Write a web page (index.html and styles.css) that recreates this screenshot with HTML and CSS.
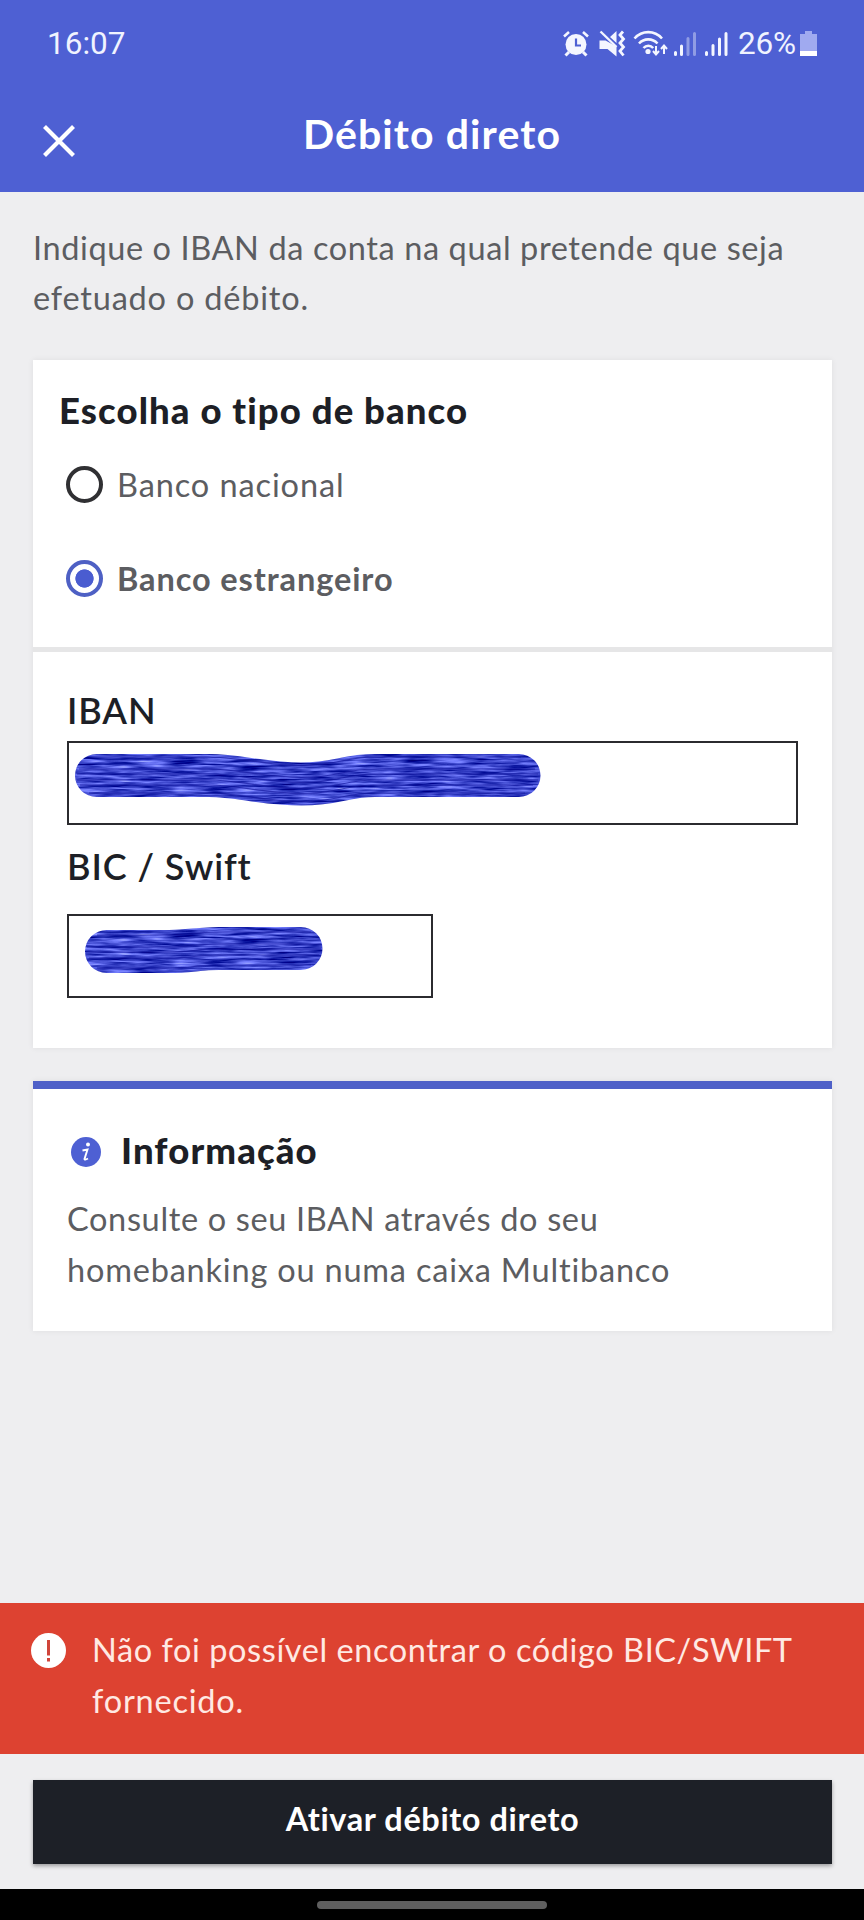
FILE: index.html
```
<!DOCTYPE html>
<html lang="pt">
<head>
    <meta charset="UTF-8">
    <title>Débito direto</title>
    <link rel="stylesheet" href="styles.css">
</head>
<body>
    <header class="header">
        <div class="status-bar">
            <span class="time">16:07</span>
            <svg class="status-icons" width="173" height="30" viewBox="0 0 173 30">
                <!-- alarm -->
                <g fill="none" stroke="#f4f6ff">
                    <circle cx="14" cy="15.5" r="10.5" fill="#f4f6ff" stroke="none"/>
                    <path d="M2 7.500L7 3M21 3l5 4.500" stroke-width="2.600"/>
                    <path d="M7 23l-3.500 3.500M21 23l3.500 3.500" stroke-width="3"/>
                    <path d="M14 9.500v7h5" stroke="#4e60d3" stroke-width="2.200"/>
                </g>
                <!-- mute / vibrate -->
                <g fill="none" stroke="#f4f6ff" stroke-width="2.400">
                    <path d="M37.500 11.500h6l11 6v10l-9-7.500h-8zM48 8l6.500-6v12z" fill="#f4f6ff" stroke="none"/>
                    <path d="M38.500 2.500l16 15.500"/>
                    <path d="M61 2.500l-3 3.500 3.500 4-3.500 4 3.500 4-3.500 4 3.500 4.500" stroke-width="2.800"/>
                </g>
                <!-- wifi -->
                <g fill="none" stroke="#f4f6ff" stroke-width="2.600">
                    <path d="M72.500 9.500c7.500-8.500 20-8.500 27.500 0"/>
                    <path d="M77 14.500c5-5.500 13.500-5.500 18.500 0"/>
                    <path d="M81.500 19c2.700-3 7-3 9.700 0"/>
                    <circle cx="86" cy="22.500" r="2.600" fill="#f4f6ff" stroke="none"/>
                    <path d="M94 17v8M91 22l3 3.500 3-3.500M102 25v-8M99 20l3-3.500 3 3.500" stroke-width="2"/>
                </g>
                <!-- signal -->
                <g stroke="#f4f6ff" stroke-width="3" stroke-linecap="round">
                    <path d="M113.500 25.500v-2M119.500 25.500v-8.500"/>
                    <path d="M126 25.500v-16M132.500 25.500v-21" opacity=".4"/>
                    <path d="M144.500 25.500v-2M151 25.500v-9M157.500 25.500v-15.500M164 25.500v-21"/>
                </g>
            </svg>
            <span class="battery-text">26%</span>
            <svg class="battery" width="18" height="28" viewBox="0 0 18 28">
                <path d="M5 1h7v3h5v22H0V4h5z" fill="#a0aaf0"/>
                <path d="M0 21h17v5H0z" fill="#fff"/>
            </svg>
        </div>
        <div class="title-bar">
            <svg class="close" width="32" height="32" viewBox="0 0 32 32">
                <path d="M1.500 1.500l29 29M30.500 1.500l-29 29" stroke="#fff" stroke-width="4.200"/>
            </svg>
            <h1 class="title">Débito direto</h1>
        </div>
    </header>

    <main class="content">
        <p class="intro">Indique o IBAN da conta na qual pretende que seja<br><span class="wide">efetuado o débito.</span></p>

        <section class="card">
            <div class="bank-type">
                <h2 class="bank-title">Escolha o tipo de banco</h2>
                <div class="option">
                    <span class="radio"></span>
                    <span class="option-label">Banco nacional</span>
                </div>
                <div class="option checked">
                    <span class="radio"></span>
                    <span class="option-label">Banco estrangeiro</span>
                </div>
            </div>
            <div class="fields">
                <div class="label label-iban">IBAN</div>
                <div class="field">
                    <svg width="500" height="80" viewBox="0 0 500 80">
                        <defs>
                            <filter id="marker" filterUnits="userSpaceOnUse" x="0" y="0" width="500" height="80" color-interpolation-filters="sRGB">
                                <feTurbulence type="fractalNoise" baseFrequency="0.03 0.4" numOctaves="3" seed="4"/>
                                <feColorMatrix values="1 0 0 0 -0.260  1 0 0 0 -0.220  0.900 0 0 0 0.350  0 0 0 0 1"/>
                                <feComposite in2="SourceGraphic" operator="in"/>
                            </filter>
                        </defs>
                        <path class="stroke" filter="url(#marker)" d="M27.500 32.500H140C170 32.500 195 41 232 41S275 32.500 306 32.500H450"/>
                        <g class="streaks">
                            <path d="M20 14H140C170 14 195 22.500 232 22.500S275 14 306 14H452"/>
                            <path d="M10 26H140C170 26 195 34.500 232 34.500S275 26 306 26H466"/>
                            <path d="M8 31H140C170 31 195 39.500 232 39.500S275 31 306 31H469"/>
                            <path d="M8 37H140C170 37 195 45.500 232 45.500S275 37 306 37H469"/>
                            <path d="M11 42H140C170 42 195 50.500 232 50.500S275 42 306 42H464"/>
                            <path d="M20 50H140C170 50 195 58.500 232 58.500S275 50 306 50H456"/>
                        </g>
                    </svg>
                </div>
                <div class="label label-bic">BIC / Swift</div>
                <div class="field field-bic">
                    <svg width="300" height="80" viewBox="0 0 300 80">
                        <path class="stroke" filter="url(#marker)" d="M37.500 35.500H100C120 35.500 130 32.500 150 32.500H232"/>
                        <g class="streaks">
                            <path d="M28 19H100C120 19 130 16 150 16H242"/>
                            <path d="M18 31H100C120 31 130 28 150 28H252"/>
                            <path d="M17 36H100C120 36 130 33 150 33H252"/>
                            <path d="M20 42H100C120 42 130 39 150 39H250"/>
                            <path d="M28 52H100C120 52 130 49 150 49H242"/>
                        </g>
                    </svg>
                </div>
            </div>
        </section>

        <section class="card info">
            <div class="info-head">
                <svg class="info-icon" width="30" height="30" viewBox="0 0 30 30">
                    <circle cx="15" cy="15" r="15" fill="#4e60d3"/>
                    <circle cx="17" cy="7.500" r="2" fill="#fff"/>
                    <path d="M11.500 13.500l5-1-3 9.500q0 1.500 3.500-.500" fill="none" stroke="#fff" stroke-width="1.900"/>
                </svg>
                <h2 class="info-title">Informação</h2>
            </div>
            <p class="info-text">Consulte o seu IBAN através do seu<br><span class="wide">homebanking ou numa caixa Multibanco</span></p>
        </section>
    </main>

    <div class="alert">
        <svg class="alert-icon" width="35" height="35" viewBox="0 0 35 35">
            <circle cx="17.500" cy="17.500" r="17.500" fill="#fff"/>
            <path d="M17.500 7v15.500M17.500 25v3.500" stroke="#d0453a" stroke-width="3"/>
        </svg>
        <p class="alert-text">Não foi possível encontrar o código BIC/SWIFT<br><span class="wide">fornecido.</span></p>
    </div>

    <footer class="footer">
        <button class="submit">Ativar débito direto</button>
    </footer>
    <div class="nav-bar"><span class="pill"></span></div>
</body>
</html>
```

FILE: styles.css
```
* {
    box-sizing: border-box;
}

body {
    margin: 0;
    height: 1920px;
    display: flex;
    flex-direction: column;
    background: #eeeef0;
    color: #1d1f26;
    font-family: Lato, sans-serif;
    font-size: 32.5px;
    overflow: hidden;
}

h1, h2, p {
    margin: 0;
}

.header {
    height: 192px;
    background: #4e60d3;
    color: #fff;
}

.status-bar {
    display: flex;
    align-items: center;
    height: 87px;
    padding: 0 46px 0 47px;
    font-family: Roboto, sans-serif;
    font-size: 31.5px;
    color: #f0f3ff;
}

.status-icons {
    margin-left: auto;
}

.battery-text {
    margin-left: 3px;
    letter-spacing: -0.2px;
}

.battery {
    margin-left: 4px;
}

.title-bar {
    display: grid;
    grid-template-columns: 32px 1fr 32px;
    align-items: center;
    padding: 22px 43px 0;
}

.close {
    margin-top: 14px;
}

.title {
    font-size: 41px;
    font-weight: 700;
    line-height: 50px;
    letter-spacing: 1.1px;
    text-align: center;
}

.content {
    padding: 31px 32px 0 33px;
}

.intro {
    line-height: 50px;
    letter-spacing: 0.6px;
    color: #5c5d61;
    margin-bottom: 37px;
    white-space: nowrap;
}

.wide {
    letter-spacing: 0.8px;
}

.card {
    background: #fff;
    box-shadow: 0 0 6px rgba(0, 0, 0, 0.07);
}

.bank-type {
    height: 292px;
    padding: 28px 26px 0;
    border-bottom: 5px solid #e6e6e7;
}

.bank-title,
.info-title {
    font-size: 36.5px;
    font-weight: 900;
    line-height: 44px;
    letter-spacing: 1.1px;
}

.option {
    display: flex;
    align-items: center;
    gap: 14px;
    height: 40px;
    margin: 32px 0 54px 7px;
    letter-spacing: 0.9px;
    color: #5c5d61;
}

.option.checked {
    margin: 0 0 0 7px;
    font-weight: 700;
}

.radio {
    width: 37px;
    height: 37px;
    border: 4px solid #303033;
    border-radius: 50%;
}

.checked .radio {
    border-color: #4e60c4;
    background: radial-gradient(circle, #4a5cd0 8.800px, #fff 9.500px);
}

.fields {
    padding: 36px 34px 50px;
}

.label {
    font-size: 36px;
    font-weight: 600;
    line-height: 44px;
    letter-spacing: 0.9px;
    margin-bottom: 9px;
}

.label-bic {
    margin: 19px 0 26px;
}

.field {
    height: 84px;
    border: 2px solid #2b2b2f;
}

.field svg {
    display: block;
}

.field-bic {
    width: 366px;
}

.stroke {
    fill: none;
    stroke: #3a44d2;
    stroke-width: 43px;
    stroke-linecap: round;
}

.streaks {
    fill: none;
    stroke: #1418a0;
    stroke-width: 1.2px;
    opacity: 0.7;
}

.info {
    margin-top: 33px;
    border-top: 8px solid #4e60c8;
    padding: 39px 34px 36px;
}

.info-head {
    display: flex;
    align-items: center;
    gap: 20px;
    padding-left: 4px;
    margin-bottom: 22px;
}

.info-icon {
    margin-top: 3px;
}

.info-text {
    line-height: 50.5px;
    letter-spacing: 0.65px;
    color: #5c5d61;
    white-space: nowrap;
}

.alert {
    display: flex;
    height: 151px;
    margin-top: auto;
    padding: 22px 31px;
    background: #dd4231;
    color: #ffe9e3;
}

.alert-icon {
    margin: 8px 26px 0 0;
}

.alert-text {
    line-height: 50.5px;
    letter-spacing: 0.58px;
    white-space: nowrap;
}

.footer {
    padding: 26px 32px 25px 33px;
}

.submit {
    display: block;
    width: 100%;
    height: 84px;
    padding: 0 0 7px;
    border: 0;
    background: #1d2027;
    box-shadow: 0 2px 4px rgba(0, 0, 0, 0.35);
    color: #fff;
    font-family: inherit;
    font-size: 32.5px;
    font-weight: 700;
    letter-spacing: 0.6px;
}

.nav-bar {
    height: 31px;
    padding-top: 12px;
    background: #000;
}

.pill {
    display: block;
    width: 230px;
    height: 8px;
    margin: 0 auto;
    border-radius: 4px;
    background: #5f5f5f;
}
```
